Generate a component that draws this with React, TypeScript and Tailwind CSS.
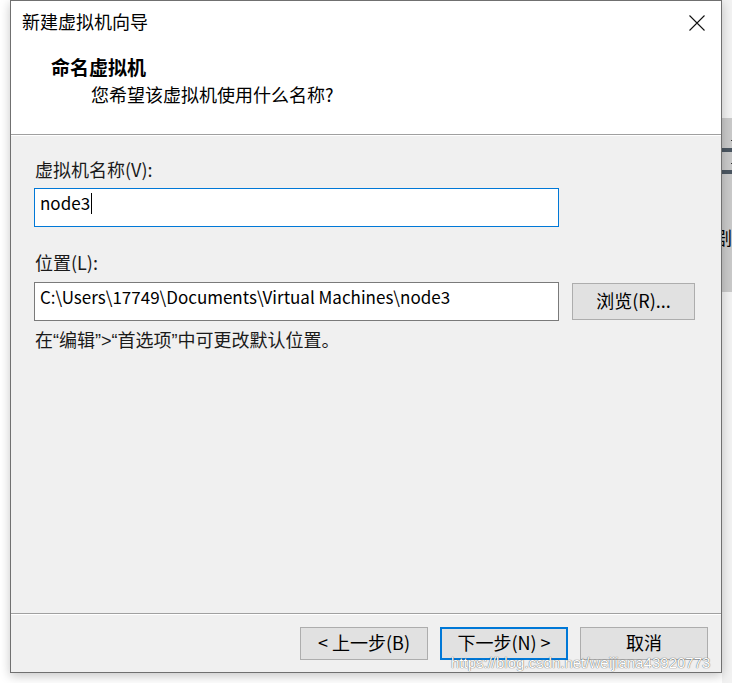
import React from 'react';

const font = "font-['Noto_Sans_CJK_SC',sans-serif]";

const WinButton: React.FC<{ label: string; primary?: boolean; className?: string }> = ({ label, primary, className }) => (
  <div
    className={
      'flex items-center justify-center bg-[#e1e1e1] text-[18px] leading-none text-black pb-[3px] ' +
      (primary ? 'border-2 border-[#0078d7] ' : 'border border-[#adadad] ') +
      (className || '')
    }
  >
    {label}
  </div>
);

const App: React.FC = () => {
  return (
    <div className={`relative w-[732px] h-[683px] overflow-hidden bg-white ${font}`}>
      {/* window behind the dialog, only a sliver is visible */}
      <div className="absolute left-[722px] top-0 w-[10px] h-full bg-[#f2f2f2]">
        <div className="mt-[118px] h-[174px] bg-[#c9c9c9] flex flex-col">
          <div className="mt-[22px] ml-[9px] w-[1px] h-[1px] bg-[#333]" />
          <div className="mt-[7px] h-[4px] bg-[#4b5661]" />
          <div className="mt-[11px] ml-[9px] w-[1px] h-[1px] bg-[#333]" />
          <div className="mt-[6px] h-[4px] bg-[#4b5661]" />
          <div className="mt-[54px] -ml-[8px] text-[18px] leading-[18px] text-black">剧</div>
        </div>
      </div>

      {/* dialog */}
      <div className="absolute left-[10px] top-0 w-[712px] h-[673px] border border-[#707070] flex flex-col shadow-[0_3px_10px_rgba(0,0,0,0.22)]">
        {/* header */}
        <div className="h-[133px] bg-white flex flex-col">
          <div className="flex items-center justify-between pl-[11px] pr-[16px] pt-[8px]">
            <span className="text-[18px] leading-[24px] text-black">新建虚拟机向导</span>
            <svg width="16" height="16" viewBox="0 0 16 16" className="mt-[4px]">
              <path d="M0.5 0.5 L15.5 15.5 M15.5 0.5 L0.5 15.5" stroke="#111" strokeWidth="1.1" fill="none" />
            </svg>
          </div>
          <div className="pl-[40px] mt-[22px] text-[19px] leading-[24px] font-bold text-black">命名虚拟机</div>
          <div className="pl-[80px] mt-[3px] text-[18px] leading-[24px] text-black">您希望该虚拟机使用什么名称?</div>
        </div>
        <div className="h-[1px] bg-[#a0a0a0]" />
        <div className="h-[1px] bg-white" />

        {/* body */}
        <div className="flex-1 bg-[#f0f0f0] flex flex-col pl-[23px]">
          <div className="mt-[21px] pl-[1px] text-[18px] leading-[24px] text-[#1a1a1a]">虚拟机名称(V):</div>
          <div className="mt-[7px] w-[525px] h-[39px] bg-white border border-[#0078d7] flex items-center pl-[5px] pb-[9px]">
            <span className="text-[17px] leading-[24px] text-black">node3</span>
            <span className="ml-[1px] w-[1px] h-[21px] bg-black" />
          </div>

          <div className="mt-[23px] pl-[1px] text-[18px] leading-[24px] text-[#1a1a1a]">位置(L):</div>
          <div className="mt-[8px] flex items-center gap-[13px]">
            <div className="w-[525px] h-[39px] bg-white border border-[#7a7a7a] flex items-center pl-[5px] pb-[9px]">
              <span className="text-[17px] leading-[24px] text-black">C:\Users\17749\Documents\Virtual Machines\node3</span>
            </div>
            <WinButton label="浏览(R)..." className="w-[123px] h-[37px]" />
          </div>

          <div className="mt-[6px] pl-[1px] text-[18px] leading-[24px] text-[#1a1a1a]">
            在<span className="font-['Liberation_Sans',sans-serif]">“</span>编辑<span className="font-['Liberation_Sans',sans-serif]">”&gt;“</span>首选项<span className="font-['Liberation_Sans',sans-serif]">”</span>中可更改默认位置。
          </div>
        </div>

        {/* footer */}
        <div className="h-[1px] bg-[#a0a0a0]" />
        <div className="h-[1px] bg-white" />
        <div className="h-[57px] bg-[#f0f0f0] flex justify-end items-start gap-[12px] pr-[13px] pt-[12px]">
          <WinButton label="< 上一步(B)" className="w-[128px] h-[33px]" />
          <WinButton label="下一步(N) >" primary className="w-[128px] h-[33px]" />
          <WinButton label="取消" className="w-[128px] h-[33px]" />
        </div>
      </div>

      {/* watermark */}
      <div className="absolute left-[451px] top-[654px] text-[15px] leading-[18px] font-['Liberation_Sans',sans-serif] text-white [text-shadow:0_0_1px_rgba(0,0,0,0.6),0_0_1px_rgba(0,0,0,0.4)] whitespace-nowrap">
        https://blog.csdn.net/weijiana43920773
      </div>
    </div>
  );
};

export default App;
